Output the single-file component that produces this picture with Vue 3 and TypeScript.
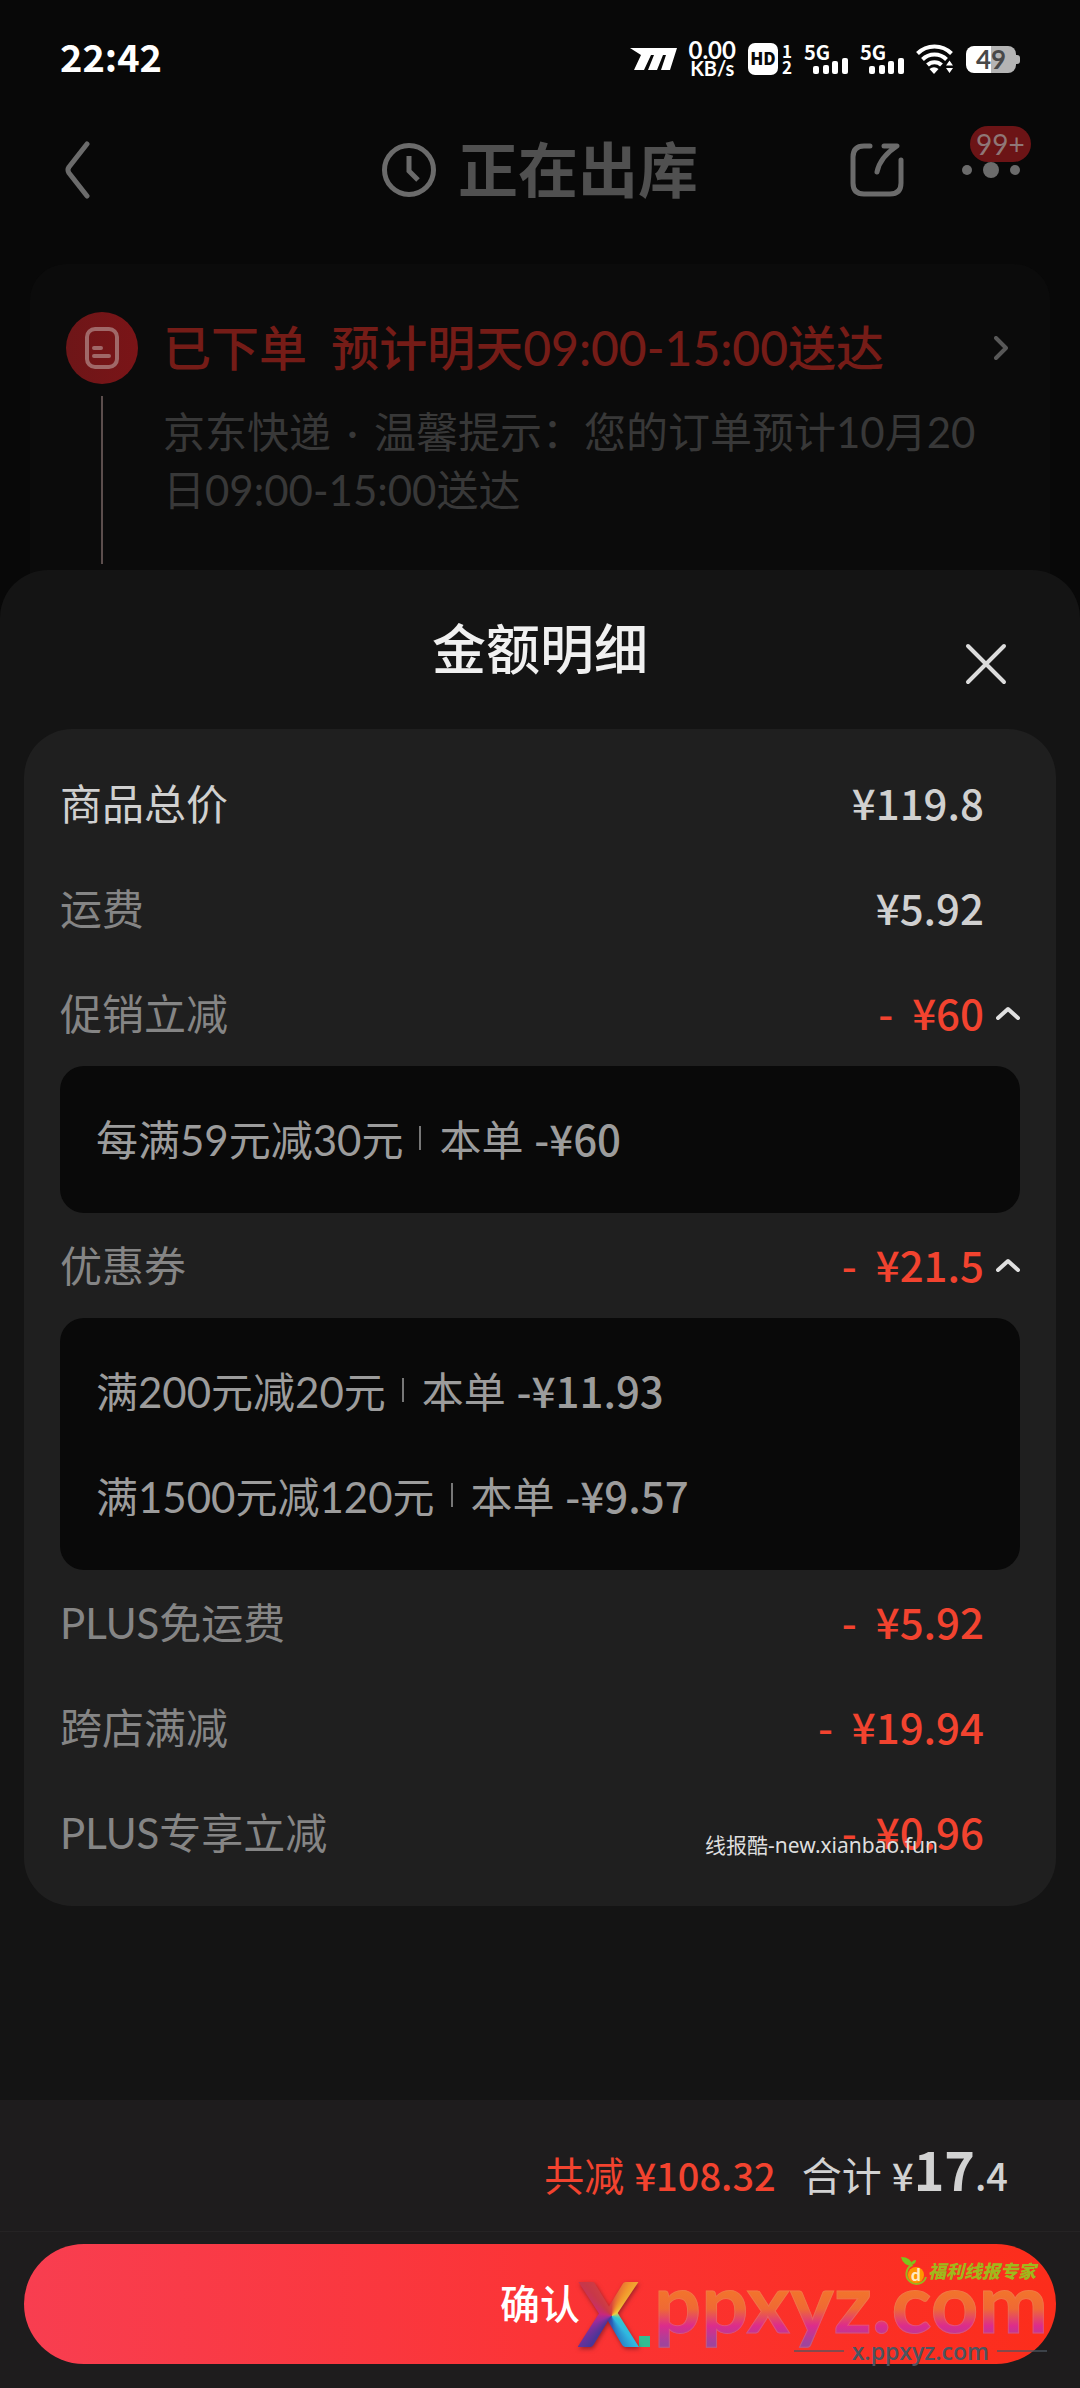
<script setup lang="ts">
import { ref } from 'vue'

interface Discount {
  rule: string
  amount: string
}

interface Row {
  id: string
  label: string
  amount: string
  strong?: boolean
  off?: boolean
  discounts?: Discount[]
}

const rows: Row[] = [
  { id: 'goods', label: '商品总价', amount: '¥119.8', strong: true },
  { id: 'freight', label: '运费', amount: '¥5.92' },
  {
    id: 'promo',
    label: '促销立减',
    amount: '¥60',
    off: true,
    discounts: [{ rule: '每满59元减30元', amount: '¥60' }],
  },
  {
    id: 'coupon',
    label: '优惠券',
    amount: '¥21.5',
    off: true,
    discounts: [
      { rule: '满200元减20元', amount: '¥11.93' },
      { rule: '满1500元减120元', amount: '¥9.57' },
    ],
  },
  { id: 'plus-freight', label: 'PLUS免运费', amount: '¥5.92', off: true },
  { id: 'cross-store', label: '跨店满减', amount: '¥19.94', off: true },
  { id: 'plus-extra', label: 'PLUS专享立减', amount: '¥0.96', off: true },
]

const open = ref<Record<string, boolean>>({ promo: true, coupon: true })

function toggle(id: string): void {
  open.value[id] = !open.value[id]
}
</script>

<template>
  <div class="page">
    <div class="status">
      <time class="clock-time">22:42</time>
      <div class="status-icons">
        <svg width="47" height="22" viewBox="0 0 47 22" fill="#fff" aria-hidden="true">
          <path d="M0 0H47L40 22H31L36 7H33L27 22H18L24 7H21L14 22H4L11 7Z" />
        </svg>
        <div class="speed"><span>0.00</span><small>KB/s</small></div>
        <div class="hd">
          <span class="hd-box">HD</span>
          <span class="hd-sims"><i>1</i><i>2</i></span>
        </div>
        <svg v-for="n in 2" :key="n" class="signal" width="44" height="32" viewBox="0 0 44 32" fill="#fff" aria-hidden="true">
          <text x="0" y="17" class="signal-text">5G</text>
          <rect x="9" y="23" width="6" height="8" rx="2" />
          <rect x="19" y="22" width="6" height="9" rx="2" />
          <rect x="28" y="18" width="6" height="13" rx="2" />
          <rect x="38" y="15" width="6" height="16" rx="2" />
        </svg>
        <svg width="38" height="30" viewBox="0 0 38 30" fill="none" aria-hidden="true">
          <g stroke="#fff" stroke-width="4">
            <path d="M1.500 9.500a24 24 0 0 1 34 0" />
            <path d="M6.500 15.500a17 17 0 0 1 24 0" />
            <path d="M11.500 21a10 10 0 0 1 14 0" />
          </g>
          <path d="M13.500 25a7 7 0 0 1 9 0l-4.500 5z" fill="#fff" />
          <path d="M30 21.500l3.500-5 3.500 5zM30 24l3.500 5 3.500-5z" fill="#fff" />
        </svg>
        <div class="battery"><span>49</span></div>
      </div>
    </div>

    <header class="header">
      <button class="icon-button back" type="button" aria-label="返回">
        <svg width="26" height="60" viewBox="0 0 26 60" fill="none" stroke="#6b6b6b" stroke-width="5" stroke-linecap="round" stroke-linejoin="round">
          <path d="M22 4L4 27q-2 3 0 6l18 23" />
        </svg>
      </button>
      <h1 class="title">
        <svg width="54" height="54" viewBox="0 0 54 54" fill="none" stroke="#6b6b6b" stroke-width="5" aria-hidden="true">
          <circle cx="27" cy="27" r="24.500" />
          <path d="M27 13v15l9 9" />
        </svg>
        正在出库
      </h1>
      <div class="actions">
        <button class="icon-button" type="button" aria-label="分享">
          <svg width="54" height="54" viewBox="0 0 54 54" fill="none" stroke="#6b6b6b" stroke-width="5" stroke-linecap="round" stroke-linejoin="round">
            <path d="M20 3H14Q3 3 3 14V40Q3 51 14 51H40Q51 51 51 40V17" />
            <path d="M34 3H47Q30 14 27 29" />
          </svg>
        </button>
        <button class="icon-button more" type="button" aria-label="更多">
          <svg width="58" height="16" viewBox="0 0 58 16" fill="#6b6b6b">
            <circle cx="5" cy="8" r="5" />
            <circle cx="29" cy="8" r="8" />
            <circle cx="53" cy="8" r="5" />
          </svg>
          <span class="badge">99+</span>
        </button>
      </div>
    </header>

    <section class="order">
      <div class="track">
        <div class="track-icon">
          <svg width="34" height="42" viewBox="0 0 34 42" fill="none" stroke="#a06868" stroke-width="4" stroke-linecap="round" aria-hidden="true">
            <rect x="2" y="2" width="30" height="38" rx="8" />
            <path d="M9 21h7M9 29h15" />
          </svg>
        </div>
        <div class="track-line"></div>
      </div>
      <div class="order-body">
        <h2 class="order-title">
          已下单&nbsp; 预计明天09:00-15:00送达
          <svg width="14" height="24" viewBox="0 0 14 24" fill="none" stroke="#585858" stroke-width="4" stroke-linecap="round" stroke-linejoin="round" aria-hidden="true">
            <path d="M2 2l10 10L2 22" />
          </svg>
        </h2>
        <p class="order-text">京东快递 &thinsp;·&thinsp; 温馨提示：您的订单预计10月20日09:00-15:00送达</p>
      </div>
    </section>

    <main class="sheet">
      <div class="sheet-head">
        <h2>金额明细</h2>
        <button class="icon-button close" type="button" aria-label="关闭">
          <svg width="42" height="42" viewBox="0 0 42 42" fill="none" stroke="#dcdcdc" stroke-width="4" stroke-linecap="round">
            <path d="M3 3l36 36M39 3L3 39" />
          </svg>
        </button>
      </div>

      <div class="card">
        <template v-for="row in rows" :key="row.id">
          <div class="row">
            <span class="label" :class="{ strong: row.strong }">{{ row.label }}</span>
            <span class="price" :class="{ off: row.off }"><template v-if="row.off">-&nbsp; </template>{{ row.amount }}</span>
            <button
              v-if="row.discounts"
              class="icon-button fold"
              :class="{ closed: !open[row.id] }"
              type="button"
              :aria-expanded="open[row.id]"
              :aria-label="row.label"
              @click="toggle(row.id)"
            >
              <svg width="24" height="14" viewBox="0 0 24 14" fill="none" stroke="#e0e0e0" stroke-width="4" stroke-linecap="round" stroke-linejoin="round">
                <path d="M2 12L12 3l10 9" />
              </svg>
            </button>
          </div>
          <ul v-if="row.discounts && open[row.id]" class="box">
            <li v-for="d in row.discounts" :key="d.rule">
              <span>{{ d.rule }}</span>
              <i class="bar"></i>
              <span>本单 <b>-{{ d.amount }}</b></span>
            </li>
          </ul>
        </template>
        <span class="site-mark">线报酷-new.xianbao.fun</span>
      </div>
    </main>

    <footer class="footer">
      <div class="totals">
        <span class="saved">共减 <b>¥108.32</b></span>
        <span class="sum">合计 <b>¥<strong>17</strong>.4</b></span>
      </div>
      <div class="submit">
        <button class="confirm" type="button">确认</button>
        <div class="brand" aria-hidden="true">
          <span class="brand-x">X</span><span class="brand-dot"></span><span class="brand-name">ppxyz.com</span>
        </div>
        <div class="brand-sub" aria-hidden="true"><span>x.ppxyz.com</span></div>
        <div class="expert" aria-hidden="true">
          <svg width="28" height="30" viewBox="0 0 28 30">
            <path d="M1 1q10 0 12 9Q3 10 1 1z" fill="#7cc51c" />
            <path d="M11 8q1-4 5-4q0 4-5 5z" fill="#7cc51c" />
            <path d="M12 9a10 10 0 1 0 14 12" fill="none" stroke="#9ab51e" stroke-width="2" />
            <circle cx="16" cy="19" r="8" fill="#ff9500" />
            <text x="11" y="25" class="expert-d">d</text>
          </svg>
          <span>福利线报专家</span>
        </div>
      </div>
    </footer>
  </div>
</template>

<style>
body {
  margin: 0;
  background: #080808;
}
</style>

<style scoped>
.page {
  display: flex;
  flex-direction: column;
  min-height: 100vh;
  background: #080808;
  font-family: Lato, "Noto Sans CJK SC", sans-serif;
  font-size: 42px;
}

h1,
h2,
p,
ul {
  margin: 0;
  padding: 0;
}

i {
  font-style: normal;
}

svg {
  display: block;
  flex: none;
}

.icon-button {
  display: flex;
  padding: 0;
  border: 0;
  background: none;
  font-family: inherit;
}

/* status bar */
.status {
  display: flex;
  align-items: center;
  justify-content: space-between;
  height: 112px;
  padding: 0 60px;
  color: #fff;
  font-family: "Noto Sans CJK SC", sans-serif;
}

.clock-time {
  font-size: 38px;
  font-weight: 700;
  line-height: 48px;
}

.status-icons {
  display: flex;
  align-items: center;
  gap: 12px;
  padding-top: 6px;
}

.speed {
  display: flex;
  flex-direction: column;
  align-items: center;
  font-family: Lato, sans-serif;
  font-weight: 700;
  font-size: 24px;
  line-height: 18px;
}

.speed small {
  font-size: 20px;
}

.hd {
  display: flex;
  gap: 4px;
}

.hd-box {
  width: 30px;
  border-radius: 7px;
  background: #fff;
  color: #080808;
  font-size: 17px;
  font-weight: 900;
  line-height: 30px;
  text-align: center;
}

.hd-sims {
  display: flex;
  flex-direction: column;
  font-size: 17px;
  font-weight: 700;
  line-height: 16px;
}

.signal {
  overflow: visible;
}

.signal-text {
  font-size: 20px;
  font-weight: 700;
}

.battery {
  position: relative;
  width: 50px;
  margin-right: 4px;
  border-radius: 8px;
  background: linear-gradient(90deg, #fff 49%, #b4b4b4 49%);
  color: #484848;
  font-family: Lato, sans-serif;
  font-size: 26px;
  font-weight: 700;
  line-height: 27px;
  text-align: center;
}

.battery::after {
  content: "";
  position: absolute;
  top: 9px;
  right: -4px;
  width: 4px;
  height: 9px;
  border-radius: 0 3px 3px 0;
  background: #b4b4b4;
}

/* page header */
.header {
  display: grid;
  grid-template-columns: 1fr auto 1fr;
  align-items: center;
  height: 116px;
  padding: 0 60px;
}

.back {
  padding-left: 5px;
}

.title {
  display: flex;
  align-items: center;
  gap: 22px;
  color: #505050;
  font-size: 60px;
  font-weight: 700;
  line-height: 72px;
}

.actions {
  display: flex;
  align-items: center;
  justify-content: flex-end;
  gap: 58px;
}

.more {
  position: relative;
}

.badge {
  position: absolute;
  bottom: 16px;
  left: 8px;
  padding: 0 6px;
  border-radius: 18px;
  background: #6c1416;
  color: #8f7777;
  font-size: 28px;
  line-height: 36px;
}

/* order card */
.order {
  display: flex;
  gap: 25px;
  margin: 36px 30px 0;
  padding: 48px 42px 54px 36px;
  border-radius: 36px;
  background: #0b0b0b;
}

.track {
  display: flex;
  flex-direction: column;
  align-items: center;
  width: 72px;
}

.track-icon {
  display: flex;
  align-items: center;
  justify-content: center;
  width: 72px;
  height: 72px;
  border-radius: 50%;
  background: linear-gradient(90deg, #6e1618, #7a1417);
}

.track-line {
  width: 2px;
  height: 168px;
  margin-top: 12px;
  background: #5c4e4d;
}

.order-body {
  flex: 1;
}

.order-title {
  display: flex;
  align-items: center;
  justify-content: space-between;
  color: #751c17;
  font-size: 48px;
  font-weight: 500;
  line-height: 72px;
}

.order-text {
  margin-top: 19px;
  padding-right: 18px;
  color: #383838;
  line-height: 58px;
}

/* bottom sheet */
.sheet {
  flex: 1;
  margin-top: -48px;
  padding: 0 24px 48px;
  border-radius: 48px 48px 0 0;
  background: #141414;
}

.sheet-head {
  position: relative;
  height: 159px;
}

.sheet-head h2 {
  color: #f0f0f0;
  font-size: 54px;
  font-weight: 500;
  line-height: 159px;
  text-align: center;
}

.close {
  position: absolute;
  top: 73px;
  right: 49px;
}

.card {
  position: relative;
  padding: 22px 36px 21px;
  border-radius: 48px;
  background: #1f1f1f;
}

.row,
.box li {
  box-sizing: border-box;
  display: flex;
  align-items: center;
  height: 105px;
  padding-bottom: 4px;
}

.row {
  position: relative;
  justify-content: space-between;
  padding-right: 36px;
}

.label {
  color: #858585;
}

.label.strong {
  color: #d0d0d0;
}

.price,
b {
  font-family: "Noto Sans CJK SC", sans-serif;
  font-weight: 500;
}

.price {
  color: #d0d0d0;
}

.price.off {
  color: #f2432f;
}

.fold {
  position: absolute;
  top: 45px;
  right: 0;
}

.fold.closed {
  transform: rotate(180deg);
}

.box {
  padding: 21px 36px;
  border-radius: 24px;
  background: #090909;
  color: #9c9c9c;
  list-style: none;
}

.bar {
  width: 2px;
  height: 24px;
  margin: 0 18px 0 16px;
  background: #777;
}

.site-mark {
  position: absolute;
  right: 118px;
  bottom: 48px;
  color: #dedede;
  font-family: "Noto Sans", "Noto Sans CJK SC", sans-serif;
  font-size: 21px;
  line-height: 26px;
}

/* footer */
.footer {
  background: #1e1c1d;
}

.totals {
  display: flex;
  align-items: baseline;
  justify-content: flex-end;
  gap: 26px;
  height: 132px;
  box-sizing: border-box;
  padding: 0 72px;
  border-bottom: 1px solid #252324;
  font-size: 40px;
  line-height: 150px;
}

.totals b {
  font-size: 38px;
}

.saved {
  color: #f2432f;
}

.sum {
  color: #d2d2d2;
}

.totals strong {
  font-size: 52px;
  font-weight: 700;
  line-height: 60px;
}

.submit {
  position: relative;
  padding: 12px 24px 24px;
}

.confirm {
  display: block;
  width: 100%;
  height: 120px;
  padding: 0 0 4px;
  border: 0;
  border-radius: 60px;
  background: linear-gradient(90deg, #f83e50, #fb3436 50%, #fc2d1b);
  color: #fff;
  font: 500 40px/116px "Noto Sans CJK SC", sans-serif;
}

/* brand marks lying over the button */
.brand {
  position: absolute;
  right: 32px;
  bottom: 28px;
  display: flex;
  align-items: flex-end;
  line-height: 96px;
  pointer-events: none;
}

.brand-x {
  background: conic-gradient(from 0deg at 55% 54%, #d9443c, #f2952c 30deg, #f0d040 60deg, #38c8c8 110deg, #30b8e0 140deg, #2860b8 175deg, #4a3598 215deg, #9a2c9c 250deg, #c8287c 280deg, #c83848 320deg, #d9443c);
  background-clip: text;
  color: transparent;
  font-size: 90px;
  font-weight: 900;
  filter: drop-shadow(1px 2px 2px #40102080);
}

.brand-dot {
  width: 11px;
  height: 11px;
  margin: 0 4px 13px 0;
  background: #34bd92;
}

.brand-name {
  margin-bottom: 11px;
  background: linear-gradient(#f2742c 40%, #ef6a34 58%, #dc2c8c 76%, #a0449c 94%);
  background-clip: text;
  color: transparent;
  font-size: 83px;
  font-weight: 700;
  -webkit-text-stroke: 1px #f0806866;
}

.brand-sub {
  position: absolute;
  right: 33px;
  bottom: 22px;
  display: flex;
  align-items: center;
  gap: 8px;
  color: #4b5560;
  font: 600 23px/30px "Open Sans", sans-serif;
}

.brand-sub::before,
.brand-sub::after {
  content: "";
  width: 50px;
  height: 2px;
  background: #4b5560aa;
}

.expert {
  position: absolute;
  top: 24px;
  right: 44px;
  display: flex;
  align-items: center;
  color: #a0b81c;
  font-size: 18px;
  font-style: italic;
  font-weight: 900;
  line-height: 30px;
}

.expert-d {
  fill: #ffe9c0;
  font-size: 17px;
  font-style: normal;
}
</style>
